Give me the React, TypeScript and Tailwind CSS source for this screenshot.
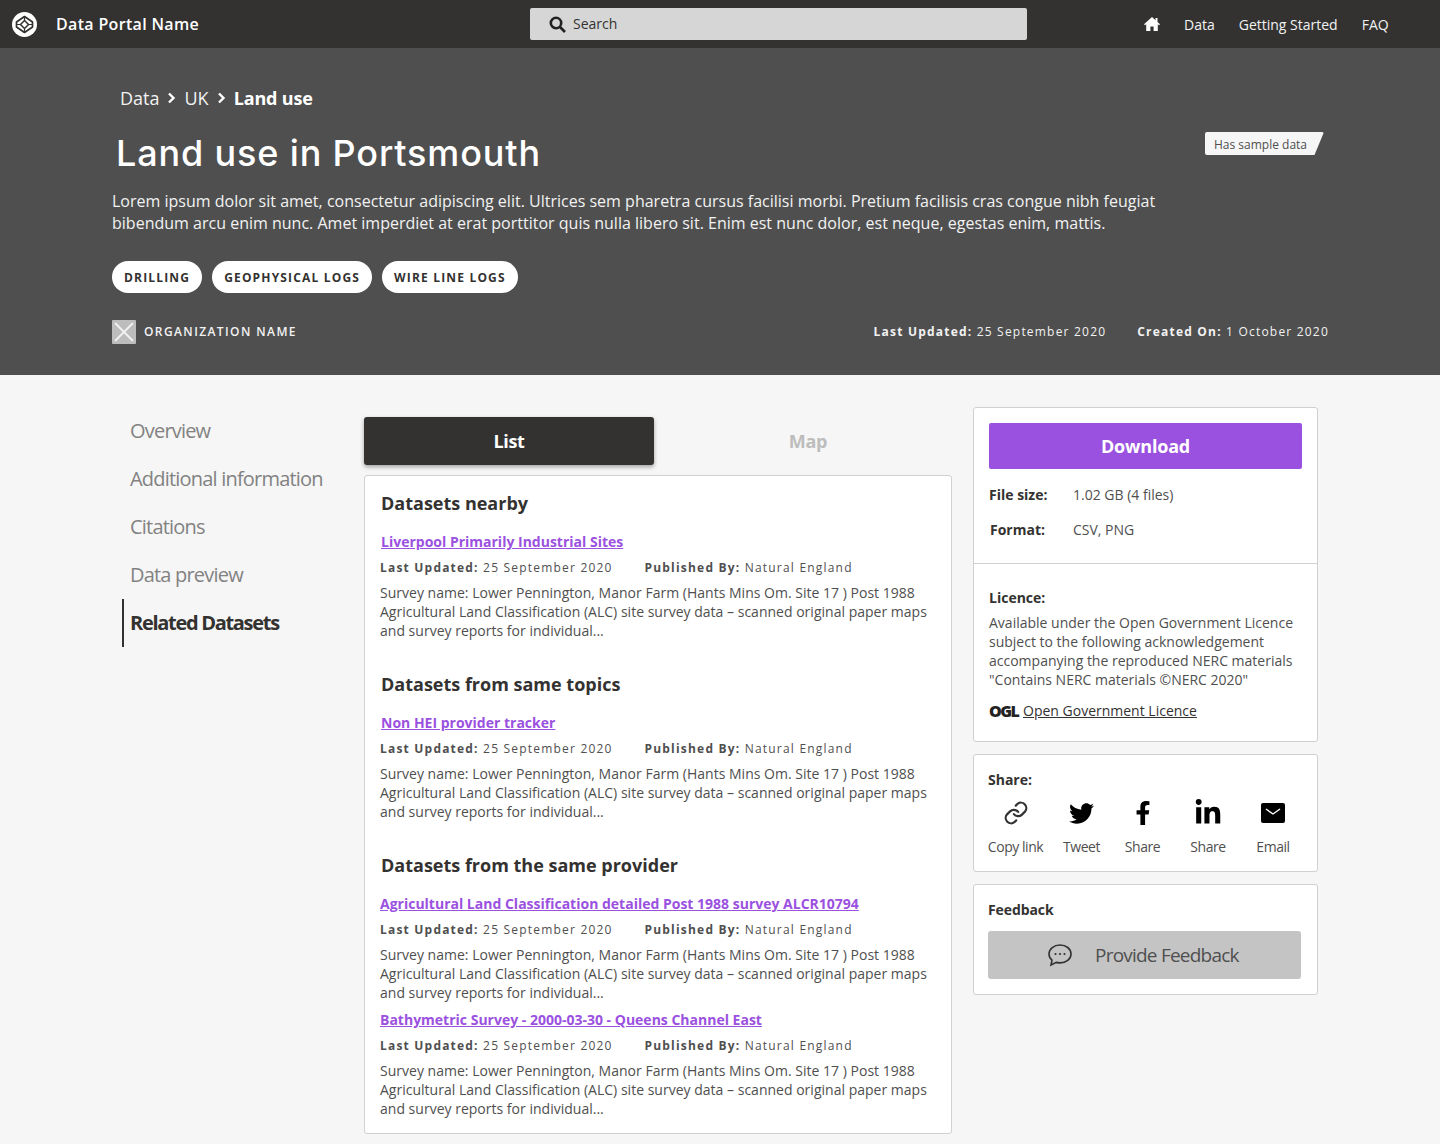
import { FaTwitter, FaFacebookF, FaLinkedinIn } from "react-icons/fa";

const sans = "font-['Open_Sans','Noto_Sans',sans-serif]";

function Result({ title, linkClass = "pl-px" }: { title: string; linkClass?: string }) {
  return (
    <div>
      <a className={`block text-[14px] leading-[20px] font-bold text-[#9b51e0] underline ${linkClass}`}>{title}</a>
      <div className="flex mt-[7px] text-[12px] leading-[18px] tracking-[1.2px] text-[#4f4f4f]">
        <p className="w-[264.5px]"><b className="font-bold">Last Updated:</b> 25 September 2020</p>
        <p><b className="font-bold">Published By:</b> Natural England</p>
      </div>
      <p className="mt-[6px] text-[14px] leading-[19px] tracking-[0.012px] text-[#4f4f4f]">
        Survey name: Lower Pennington, Manor Farm (Hants Mins Om. Site 17 ) Post 1988<br />
        Agricultural Land Classification (ALC) site survey data – scanned original paper maps<br />
        and survey reports for individual...
      </p>
    </div>
  );
}

function ShareItem({ label, icon, width }: { label: string; icon: React.ReactNode; width: string }) {
  return (
    <div className={`flex flex-col items-center ${width}`}>
      <div className="h-[32px] flex items-center justify-center text-black">{icon}</div>
      <span className="mt-[8px] whitespace-nowrap text-[14px] leading-[20px] tracking-[-0.45px] text-[#4f4f4f]">{label}</span>
    </div>
  );
}

function App() {
  return (
    <div className={`${sans} w-[1440px] h-[1144px] overflow-hidden bg-[#f6f6f6]`}>
      <header className="h-[48px] bg-[#333230] flex items-center text-white">
        <div className="w-[530px] flex items-center pl-[12px]">
          <svg width="25" height="25" viewBox="0 0 25 25">
            <circle cx="12.5" cy="12.5" r="12.5" fill="#fff" />
            <path d="M12.5 4.500 20.500 10v5l-8 5.500-8-5.500v-5Z" fill="none" stroke="#333230" strokeWidth="1.7" strokeLinejoin="round" />
            <path d="M12.5 8.500 16.500 12.500 12.500 16.500 8.500 12.500Z" fill="none" stroke="#333230" strokeWidth="1.5" />
            <path d="M12.5 4.500v4M12.5 16.500v4M4.500 12.500h4M16.500 12.500h4" stroke="#333230" strokeWidth="1.2" />
          </svg>
          <span className="ml-[19px] text-[16px] font-semibold tracking-[0.33px]">Data Portal Name</span>
        </div>
        <div className="w-[497px] h-[32px] bg-[#d6d6d6] rounded-[2px] flex items-center pl-[19px] text-[#333230]">
          <svg width="17" height="17" viewBox="0 0 17 17" fill="none" stroke="#222" strokeWidth="2.6">
            <circle cx="7" cy="7" r="5.2" />
            <path d="M11 11l5 5" />
          </svg>
          <span className="ml-[7px] text-[14px] leading-[20px] -mt-[1px]">Search</span>
        </div>
        <nav className="ml-[117px] flex items-center text-[14px] text-[#f2f2f2]">
          <svg width="16" height="14" viewBox="0 0 16 14" fill="#fff" className="mr-[24px]">
            <path d="M8 0 0 7.2l1 1L2.200 7.200V14h4.200V9.500h3.200V14h4.200V7.200L15 8.200l1-1L13.500 5V1h-2v2.200Z" />
          </svg>
          <span>Data</span>
          <span className="ml-[24px]">Getting Started</span>
          <span className="ml-[24px]">FAQ</span>
        </nav>
      </header>

      <section className="h-[327px] bg-[#4f4f4f] text-white pl-[112px] pr-[111px] relative">
        <div className="pt-[38px] pl-[8px] flex items-center text-[18px] leading-[24px] text-[#f2f2f2]">
          <span>Data</span>
          <svg width="9" height="12" viewBox="0 0 9 12" fill="none" stroke="#fff" strokeWidth="2.4" className="mx-[8px]"><path d="M2 1.500 6.500 6 2 10.500" /></svg>
          <span>UK</span>
          <svg width="9" height="12" viewBox="0 0 9 12" fill="none" stroke="#fff" strokeWidth="2.4" className="mx-[8px]"><path d="M2 1.500 6.500 6 2 10.500" /></svg>
          <span className="font-bold tracking-[-0.15px] text-white">Land use</span>
        </div>
        <h1 className="mt-[21px] pl-[4px] font-['Inter',sans-serif] text-[36px] leading-[44px] font-medium tracking-[0.85px]">Land use in Portsmouth</h1>
        <div className="absolute left-[1205px] top-[84px] h-[23px] w-[119px] bg-[#f6f6f6] [clip-path:polygon(0_0,100%_0,92%_100%,0_100%)] rounded-[2px] text-[12px] leading-[25px] pl-[9px] text-[#4f4f4f]">Has sample data</div>
        <p className="mt-[15px] text-[16px] leading-[22px] tracking-[0.007px] text-[#f2f2f2]">
          Lorem ipsum dolor sit amet, consectetur adipiscing elit. Ultrices sem pharetra cursus facilisi morbi. Pretium facilisis cras congue nibh feugiat<br />
          bibendum arcu enim nunc. Amet imperdiet at erat porttitor quis nulla libero sit. Enim est nunc dolor, est neque, egestas enim, mattis.
        </p>
        <div className="mt-[27px] flex gap-[10px]">
          {["DRILLING", "GEOPHYSICAL LOGS", "WIRE LINE LOGS"].map((t) => (
            <span key={t} className="h-[32px] px-[12px] rounded-full bg-white text-[#333230] text-[12px] leading-[33px] font-bold tracking-[1.17px]">{t}</span>
          ))}
        </div>
        <div className="mt-[27px] flex items-center justify-between">
          <div className="flex items-center">
            <svg width="24" height="24" viewBox="0 0 24 24">
              <rect width="24" height="24" rx="1" fill="#bdbdbd" />
              <path d="M3 3l18 18M21 3 3 21" stroke="#f2f2f2" strokeWidth="1.800" />
            </svg>
            <span className="ml-[8px] text-[12px] font-semibold tracking-[1.4px] text-[#f2f2f2]">ORGANIZATION NAME</span>
          </div>
          <div className="flex text-[12px] tracking-[1.2px] text-[#f2f2f2]">
            <p><b className="font-bold">Last Updated:</b> 25 September 2020</p>
            <p className="ml-[31px]"><b className="font-bold">Created On:</b> 1 October 2020</p>
          </div>
        </div>
      </section>

      <main className="flex pl-[122px] pt-[32px]">
        <nav className="w-[242px] text-[20px] tracking-[-0.8px] text-[#828282]">
          {["Overview", "Additional information", "Citations", "Data preview"].map((t) => (
            <div key={t} className="h-[48px] pl-[8px] leading-[48px]">{t}</div>
          ))}
          <div className="h-[48px] pl-[6px] border-l-2 border-[#333230] leading-[48px] font-bold tracking-[-1.3px] text-[#333230]">Related Datasets</div>
        </nav>

        <div className="w-[589px] pt-[10px]">
          <div className="flex">
            <div className="w-[290px] shrink-0 h-[48px] rounded-[3px] bg-[#333230] text-white text-[18px] leading-[48px] font-bold text-center shadow-[0_2px_4px_rgba(0,0,0,0.35)] tracking-[-0.3px]">List</div>
            <div className="w-[299px] pl-[9px] h-[48px] text-[#bdbdbd] text-[18px] leading-[48px] font-bold text-center tracking-[-0.2px]">Map</div>
          </div>
          <div className="mt-[10px] w-[588px] h-[659px] bg-white border border-[#d0d0d0] rounded-[3px] pl-[15px] pt-[13px]">
            <h2 className="pl-px text-[18px] leading-[28px] font-bold text-[#333230]">Datasets nearby</h2>
            <div className="mt-[15px]"><Result title="Liverpool Primarily Industrial Sites" /></div>
            <h2 className="mt-[30px] pl-px text-[18px] leading-[28px] font-bold text-[#333230]">Datasets from same topics</h2>
            <div className="mt-[15px]"><Result title="Non HEI provider tracker" /></div>
            <h2 className="mt-[30px] pl-px text-[18px] leading-[28px] font-bold text-[#333230]">Datasets from the same provider</h2>
            <div className="mt-[15px]"><Result title="Agricultural Land Classification detailed Post 1988 survey ALCR10794" linkClass="" /></div>
            <div className="mt-[8px]"><Result title="Bathymetric Survey - 2000-03-30 - Queens Channel East" linkClass="" /></div>
          </div>
        </div>

        <aside className="ml-[20px] w-[345px] text-[#333230]">
          <div className="h-[335px] bg-white border border-[#d0d0d0] rounded-[3px]">
            <div className="h-[156px] border-b border-[#d0d0d0] px-[15px] pt-[15px]">
              <div className="h-[46px] bg-[#9b51e0] rounded-[2px] text-white text-[18px] leading-[46px] font-bold text-center tracking-[-0.2px]">Download</div>
              <div className="mt-[16px] flex text-[14px] leading-[20px] text-[#4f4f4f]">
                <b className="w-[84px] font-bold text-[#333230]">File size:</b>1.02 GB (4 files)
              </div>
              <div className="mt-[15px] flex text-[14px] leading-[20px] text-[#4f4f4f]">
                <b className="w-[84px] pl-px font-bold text-[#333230]">Format:</b>CSV, PNG
              </div>
            </div>
            <div className="px-[15px] pt-[24px] text-[14px] text-[#4f4f4f]">
              <p className="font-bold leading-[20px] text-[#333230]">Licence:</p>
              <p className="mt-[5px] leading-[19px]">
                Available under the Open Government Licence<br />
                subject to the following acknowledgement<br />
                accompanying the reproduced NERC materials<br />
                "Contains NERC materials ©NERC 2020"
              </p>
              <div className="mt-[12px] flex items-center leading-[20px] text-[#333230]">
                <span className="text-[16px] font-extrabold tracking-[-1.6px] text-[#222] w-[34px]">OGL</span>
                <a className="underline">Open Government Licence</a>
              </div>
            </div>
          </div>

          <div className="mt-[12px] h-[118px] bg-white border border-[#d0d0d0] rounded-[3px] pl-[14px] pt-[15px]">
            <p className="text-[14px] leading-[20px] font-bold">Share:</p>
            <div className="mt-[7px] flex">
              <ShareItem label="Copy link" width="w-[55px]" icon={
                <svg width="26" height="26" viewBox="0 0 24 24" fill="none" stroke="#333" strokeWidth="2" strokeLinecap="round" strokeLinejoin="round">
                  <path d="M10 13a5 5 0 0 0 7.500.500l3-3a5 5 0 0 0-7-7l-1.700 1.700" />
                  <path d="M14 11a5 5 0 0 0-7.500-.500l-3 3a5 5 0 0 0 7 7l1.700-1.700" />
                </svg>
              } />
              <ShareItem label="Tweet" width="w-[77px]" icon={<FaTwitter size={25} />} />
              <ShareItem label="Share" width="w-[45px]" icon={<FaFacebookF size={24} />} />
              <ShareItem label="Share" width="w-[86px]" icon={<FaLinkedinIn size={28} />} />
              <ShareItem label="Email" width="w-[44px]" icon={
                <svg width="24" height="20" viewBox="0 0 24 20"><rect width="24" height="20" rx="2" fill="#000" /><path d="M5 6l7 5 7-5" fill="none" stroke="#fff" strokeWidth="1.400" /></svg>
              } />
            </div>
          </div>

          <div className="mt-[12px] h-[111px] bg-white border border-[#d0d0d0] rounded-[3px] pl-[14px] pt-[15px]">
            <p className="text-[14px] leading-[20px] font-bold tracking-[-0.1px]">Feedback</p>
            <div className="mt-[11px] w-[313px] h-[48px] bg-[#c4c4c4] rounded-[3px] flex items-center pl-[59px] text-[19px] tracking-[-0.78px] text-[#4f4f4f]">
              <svg width="26" height="24" viewBox="0 0 26 24" fill="none" stroke="#333230" strokeWidth="1.600">
                <path d="M13 2C7 2 2 5.800 2 11c0 2.500 1.200 4.600 3 6.200L4 22l5.300-2.600c1.200.3 2.400.5 3.700.5 6 0 11-3.800 11-9S19 2 13 2Z" />
                <circle cx="8.500" cy="11" r="1.100" fill="#333230" stroke="none" />
                <circle cx="13" cy="11" r="1.100" fill="#333230" stroke="none" />
                <circle cx="17.500" cy="11" r="1.100" fill="#333230" stroke="none" />
              </svg>
              <span className="ml-[22px]">Provide Feedback</span>
            </div>
          </div>
        </aside>
      </main>
    </div>
  );
}

export default App;
